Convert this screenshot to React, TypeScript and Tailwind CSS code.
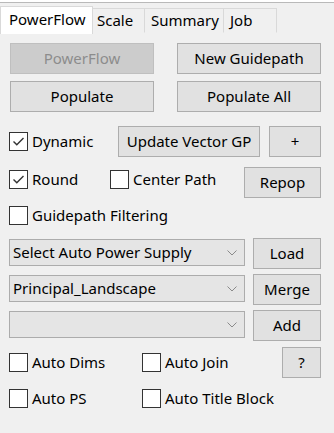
import React from "react";

const font = { fontFamily: '"Noto Sans", "Open Sans", Arial, sans-serif' };

function Btn({ label, className = "", disabled = false }: { label: string; className?: string; disabled?: boolean }) {
  return (
    <div
      className={
        "flex h-[31px] items-center justify-center border text-[15px] leading-none " +
        (disabled
          ? "border-[#bfbfbf] bg-[#cccccc] text-[#8c8c8c] "
          : "border-[#adadad] bg-[#e1e1e1] text-black ") +
        className
      }
    >
      <span className="-mt-px">{label}</span>
    </div>
  );
}

function Check({ label, checked = false, className = "" }: { label: string; checked?: boolean; className?: string }) {
  return (
    <div className={"flex items-center " + className}>
      <div className="flex h-[19px] w-[19px] shrink-0 items-center justify-center border border-[#333333] bg-white">
        {checked && (
          <svg width="17" height="17" viewBox="0 0 17 17">
            <path d="M3.5 8.5 L6.8 11.8 L13.5 5" fill="none" stroke="#333333" strokeWidth="1.4" />
          </svg>
        )}
      </div>
      <span className="ml-[4px] whitespace-nowrap text-[15px] leading-none text-black">{label}</span>
    </div>
  );
}

function Combo({ label }: { label: string }) {
  return (
    <div className="mt-px flex h-[27px] w-[236px] items-center justify-between border border-[#acacac] bg-[#e5e5e5] pl-[3px] pr-[7px]">
      <span className="-mt-px whitespace-nowrap text-[15px] leading-none text-black">{label}</span>
      <svg width="10" height="6" viewBox="0 0 10 6">
        <path d="M0.5 0.5 L5 5 L9.5 0.5" fill="none" stroke="#8a8a8a" strokeWidth="1" />
      </svg>
    </div>
  );
}

export default function App() {
  return (
    <div className="h-[433px] w-[334px] overflow-hidden bg-[#f0f0f0]" style={font}>
      <div className="h-[2px] bg-white" />
      <div className="h-px bg-[#b9b9b9]" />
      <div className="flex h-[31px] items-end">
        <div className="flex h-[28px] w-[93px] items-center border border-b-0 border-[#d9d9d9] bg-white pl-[8px] text-[15px] text-black">
          <span className="-mt-[2px]">PowerFlow</span>
        </div>
        <div className="mb-px flex h-[25px] w-[52px] items-center border-y border-r border-t-[#d9d9d9] border-r-[#d9d9d9] border-b-transparent pl-[4px] text-[15px] text-black">
          <span>Scale</span>
        </div>
        <div className="mb-px flex h-[25px] w-[79px] items-center border-y border-r border-t-[#d9d9d9] border-r-[#d9d9d9] border-b-transparent pl-[6px] text-[15px] text-black">
          <span>Summary</span>
        </div>
        <div className="mb-px flex h-[25px] w-[53px] items-center border-y border-r border-t-[#d9d9d9] border-r-[#d9d9d9] border-b-transparent pl-[6px] text-[15px] text-black">
          <span>Job</span>
        </div>
      </div>

      <div className="pl-[9px] pr-[13px]">
        <div className="mt-[9px] flex justify-between pl-px">
          <Btn label="PowerFlow" disabled className="w-[144px]" />
          <Btn label="New Guidepath" className="w-[144px]" />
        </div>
        <div className="mt-[7px] flex justify-between pl-px">
          <Btn label="Populate" className="w-[144px]" />
          <Btn label="Populate All" className="w-[144px]" />
        </div>

        <div className="mt-[14px] flex items-center">
          <Check label="Dynamic" checked className="w-[109px]" />
          <Btn label="Update Vector GP" className="w-[142px]" />
          <Btn label="+" className="ml-[9px] w-[52px]" />
        </div>

        <div className="mt-[10px] flex items-start">
          <Check label="Round" checked className="mt-[3px] w-[101px]" />
          <Check label="Center Path" className="mt-[3px] w-[134px]" />
          <Btn label="Repop" className="w-[77px]" />
        </div>

        <div className="mt-[8px] flex">
          <Check label="Guidepath Filtering" />
        </div>

        <div className="mt-[13px] flex items-start justify-between">
          <Combo label="Select Auto Power Supply" />
          <Btn label="Load" className="w-[68px]" />
        </div>
        <div className="mt-[5px] flex items-start justify-between">
          <Combo label="Principal_Landscape" />
          <Btn label="Merge" className="w-[68px]" />
        </div>
        <div className="mt-[5px] flex items-start justify-between">
          <Combo label="" />
          <Btn label="Add" className="w-[68px]" />
        </div>

        <div className="mt-[6px] flex items-center">
          <Check label="Auto Dims" className="w-[133px]" />
          <Check label="Auto Join" className="w-[140px]" />
          <Btn label="?" className="w-[39px]" />
        </div>
        <div className="mt-[11px] flex items-center">
          <Check label="Auto PS" className="w-[133px]" />
          <Check label="Auto Title Block" />
        </div>
      </div>
    </div>
  );
}
